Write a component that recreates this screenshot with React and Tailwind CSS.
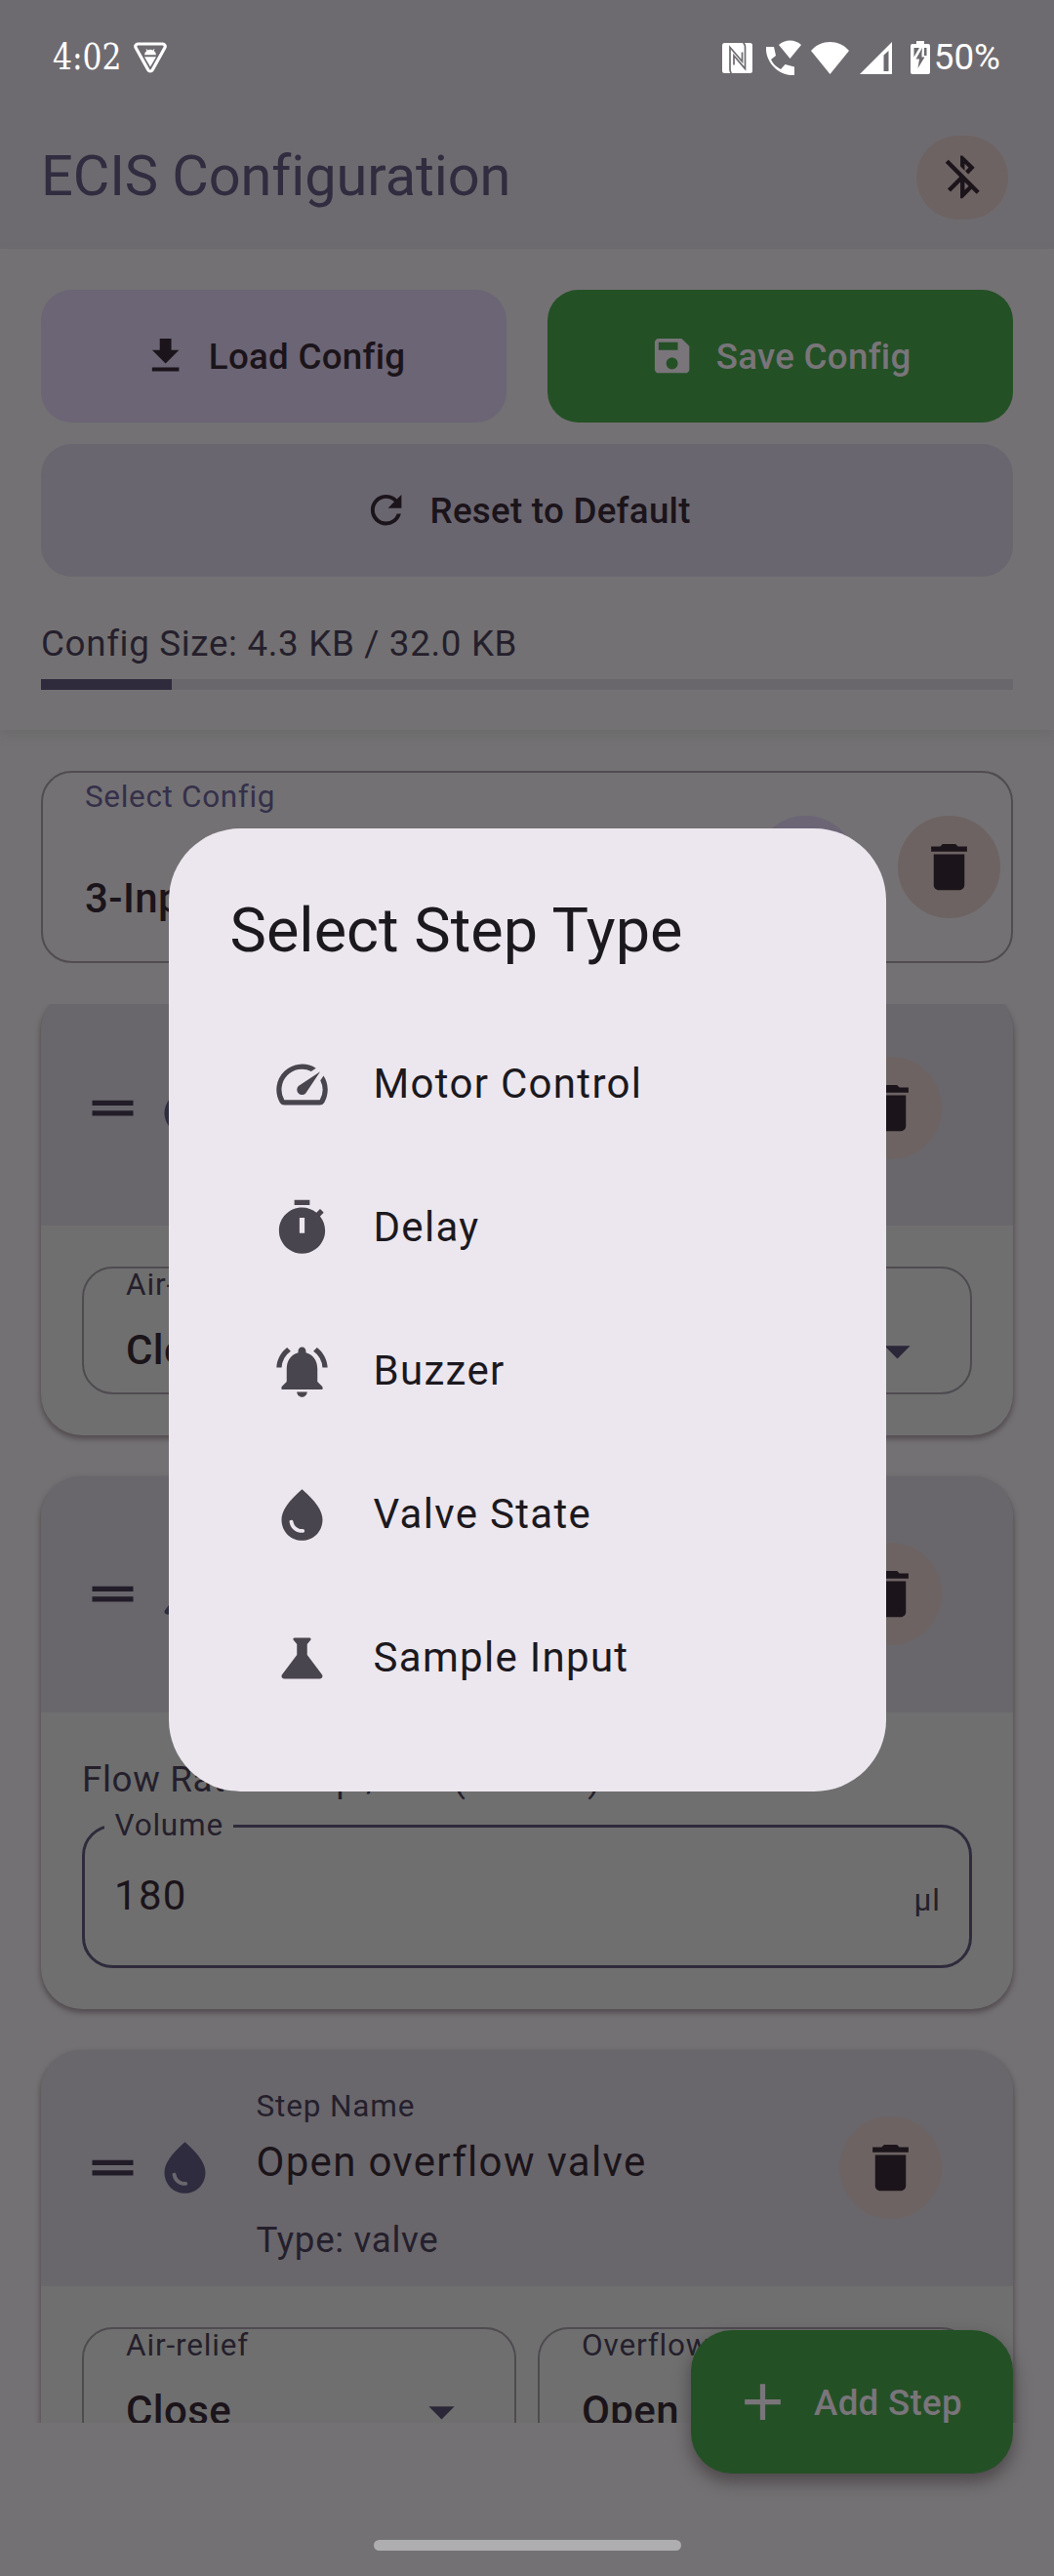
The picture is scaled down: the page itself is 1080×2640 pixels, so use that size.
const PATHS = {
  download: "M19 9h-4V3H9v6H5l7 7 7-7zM5 18v2h14v-2H5z",
  save: "M17 3H5c-1.11 0-2 .9-2 2v14c0 1.1.89 2 2 2h14c1.1 0 2-.9 2-2V7l-4-4zm-5 16c-1.66 0-3-1.34-3-3s1.34-3 3-3 3 1.34 3 3-1.34 3-3 3zm3-10H5V5h10v4z",
  refresh:
    "M17.65 6.35A7.958 7.958 0 0012 4c-4.42 0-7.99 3.58-7.99 8s3.57 8 7.99 8c3.73 0 6.84-2.55 7.73-6h-2.08A5.99 5.99 0 0112 18c-3.31 0-6-2.69-6-6s2.69-6 6-6c1.66 0 3.14.69 4.22 1.78L13 11h7V4l-2.35 2.35z",
  bluetoothOff:
    "M13 5.83l1.88 1.88-1.6 1.6 1.41 1.41 3.02-3.02L12 2h-1v5.03l2 2v-3.2zM5.41 4L4 5.41 10.59 12 5 17.59 6.41 19 11 14.41V22h1l4.29-4.29 2.3 2.29L20 18.59 5.41 4zM13 18.17v-3.76l1.88 1.88L13 18.17z",
  trash: "M6 19c0 1.1.9 2 2 2h8c1.1 0 2-.9 2-2V7H6v12zM19 4h-3.5l-1-1h-5l-1 1H5v2h14V4z",
  handle: "M20 9H4v2h16V9zM4 15h16v-2H4v2z",
  plus: "M19 13h-6v6h-2v-6H5v-2h6V5h2v6h6v2z",
  caret: "M7 10l5 5 5-5z",
  speed:
    "M20.38 8.57l-1.23 1.85a8 8 0 01-.22 7.58H5.07A8 8 0 0115.58 6.85l1.85-1.23A10 10 0 003.35 19a2 2 0 001.72 1h13.85a2 2 0 001.74-1 10 10 0 00-.27-10.44zm-9.79 6.84a2 2 0 002.83 0l5.66-8.49-8.49 5.66a2 2 0 000 2.83z",
  timer:
    "M15 1H9v2h6V1zm4.03 6.39l1.42-1.42c-.43-.51-.9-.99-1.41-1.41l-1.42 1.42C16.07 4.74 14.12 4 12 4c-4.97 0-9 4.03-9 9s4.02 9 9 9 9-4.03 9-9c0-2.12-.74-4.07-1.97-5.61zM13 14h-2V8h2v6z",
  bell: "M7.58 4.08L6.15 2.65C3.75 4.48 2.17 7.3 2.03 10.5h2a8.445 8.445 0 013.55-6.42zm12.39 6.42h2c-.15-3.2-1.73-6.02-4.12-7.85l-1.42 1.43a8.495 8.495 0 013.54 6.42zM18 11c0-3.07-1.64-5.64-4.5-6.32V4c0-.83-.67-1.5-1.5-1.5s-1.5.67-1.5 1.5v.68C7.63 5.36 6 7.92 6 11v5l-2 2v1h16v-1l-2-2v-5zm-6 11c.14 0 .27-.01.4-.04.65-.14 1.18-.58 1.44-1.18.1-.24.15-.5.15-.78h-4c.01 1.1.9 2 2.01 2z",
  drop: "M12 2c-5.33 4.55-8 8.48-8 11.8 0 4.98 3.8 8.2 8 8.2s8-3.22 8-8.2c0-3.32-2.67-7.25-8-11.8zM7.83 14c.37 0 .67.26.74.62.41 2.22 2.28 2.98 3.64 2.87.43-.02.79.32.79.75 0 .4-.32.73-.72.75-2.13.13-4.62-1.09-5.19-4.12A.75.75 0 017.83 14z",
  flask:
    "M19.8 18.4L14 10.67V6.5l1.35-1.69c.26-.33.03-.81-.39-.81H9.04c-.42 0-.65.48-.39.81L10 6.5v4.17L4.2 18.4c-.49.66-.02 1.6.8 1.6h14c.82 0 1.29-.94.8-1.6z",
};

function Icon({ name, className = "size-[63px]" }) {
  return (
    <svg viewBox="0 0 24 24" fill="currentColor" fillRule="evenodd" className={`shrink-0 ${className}`}>
      <path d={PATHS[name]} />
    </svg>
  );
}

function StatusBar() {
  return (
    <div className="flex h-[105px] items-center pt-[13px] pr-[55px] pl-[54px] text-white">
      <span className="w-[72px] origin-left scale-x-[0.85] font-['DejaVu_Serif',serif] text-[37px] leading-[44px] whitespace-nowrap">
        4:02
      </span>
      <svg viewBox="0 0 34 32" className="ml-[11px] h-8 w-[34px]">
        <path d="M4.5 2h25a2.6 2.6 0 0 1 2.3 4L19.3 28.6a2.6 2.6 0 0 1-4.6 0L2.2 6A2.6 2.6 0 0 1 4.5 2z" fill="none" stroke="#fff" strokeWidth="3.2" />
        <path d="M11 13.2a6 6 0 0 1 2.4-4.2l-.8-1.6.6-.4 1 1.5a6.4 6.4 0 0 1 5.6 0l1-1.5.6.4-.8 1.6a6 6 0 0 1 2.4 4.2zM11 15.2h12L17 25.5z" fill="#fff" />
      </svg>
      <div className="ml-auto flex items-center">
        <svg viewBox="0 0 31 31" className="size-[31px]">
          <rect width="31" height="31" rx="2.5" fill="#fff" />
          <path d="M9.500 31q-1.500-1-1.500-4V4.500L20.500 19V9.500M21.500 0q2 1 2 4v22.500L12 13v9.500" fill="none" stroke="#6e6b70" strokeWidth="1.700" />
        </svg>
        <svg viewBox="0 0 37 37" fill="#fff" className="ml-[13px] size-[37px]">
          <path d="M1 7h8l2 9-5 4c2.500 5 5.500 7.500 10 10l4.500-5 9.500 2.500V36C14 37 0 23 1 7z" />
          <path d="M14 5c6-6 17-6 23 0L25.500 19z" />
        </svg>
        <svg viewBox="0 0 39 33" fill="#fff" className="ml-[10px] h-[33px] w-[39px]">
          <path d="M0 9C10-3 29-3 39 9L19.500 33z" />
        </svg>
        <svg viewBox="0 0 33 33" className="ml-[11px] size-[33px]">
          <path d="M33 0v33H0z" fill="#fff" />
          <path d="M24.500 13.500L29.500 9v21h-5z" fill="#6e6b70" />
        </svg>
        <svg viewBox="0 0 20 34" className="ml-[19px] h-[34px] w-5">
          <path d="M6 0h8v3h4a2 2 0 0 1 2 2v27a2 2 0 0 1-2 2H2a2 2 0 0 1-2-2V5a2 2 0 0 1 2-2h4z" fill="#fff" />
          <path d="M3.500 7H9L3.500 16.500zM12 7L5.500 18.500H9l-1.500 9.500 7-11.500H11.500V13zM14 7h2.500v8H14z" fill="#6e6b70" />
        </svg>
        <span className="ml-[4px] text-[36.75px] leading-[44px]">50%</span>
      </div>
    </div>
  );
}

function Button({ icon, className, children }) {
  return (
    <div className={`flex h-[136px] items-center justify-center gap-[21px] rounded-[31.5px] text-[36.75px] font-medium tracking-[0.26px] ${className}`}>
      <Icon name={icon} className="size-[47.25px]" />
      <span className="pt-[2px]">{children}</span>
    </div>
  );
}

function TrashButton() {
  return (
    <div className="flex size-[105px] items-center justify-center rounded-full bg-[#6d6362] text-[#1b141a]">
      <Icon name="trash" />
    </div>
  );
}

function Select({ label, value }) {
  return (
    <div className="flex h-[131px] flex-1 items-start justify-between rounded-[31.5px] border-[2.6px] border-[#4f4b51] pr-[43px] pl-[43px]">
      <div>
        <div className="h-[38px] text-[31.5px] leading-[33px] tracking-[0.85px] text-[#251f2c]">{label}</div>
        <div className="mt-[14px] text-[42px] leading-[63px] font-medium tracking-[0.4px] text-[#1b141a]">{value}</div>
      </div>
      <Icon name="caret" className="mt-[53px] size-[63px] text-[#2b2738]" />
    </div>
  );
}

function StepCard({ icon, name, type, children }) {
  return (
    <div className="mb-[42px] overflow-hidden rounded-[42px] bg-[#6f6f6f] shadow-[0_3px_5px_1px_rgba(60,50,55,0.55)]">
      <div className="flex h-[241.5px] items-center bg-[#69676c] pr-[73px] pl-[42px]">
        <Icon name="handle" className="size-[63px] text-[#221c28]" />
        <Icon name={icon} className="ml-[10.5px] size-[63px] text-[#302c3f]" />
        <div className="mt-[16.5px] ml-[42px] flex-1">
          <div className="text-[31.5px] leading-[42px] tracking-[0.85px] text-[#251f2c]">Step Name</div>
          <div className="mt-[4px] text-[42px] leading-[63px] tracking-[1.31px] text-[#1b141a]">{name}</div>
          <div className="mt-[23.5px] text-[36.75px] leading-[52.5px] tracking-[0.66px] text-[#251f2c]">{type}</div>
        </div>
        <TrashButton />
      </div>
      <div className="px-[42px] pb-[42px]">{children}</div>
    </div>
  );
}

const STEP_TYPES = [
  ["speed", "Motor Control"],
  ["timer", "Delay"],
  ["bell", "Buzzer"],
  ["drop", "Valve State"],
  ["flask", "Sample Input"],
];

function StepTypeDialog() {
  return (
    <div className="absolute inset-x-0 top-[849px] flex justify-center">
      <div className="h-[987px] w-[735px] rounded-[73.5px] bg-[#ece7ee] px-[63px] pt-[63px]">
        <h2 className="text-[63px] leading-[84px] text-[#1c191e]">Select Step Type</h2>
        <ul className="mt-[42px]">
          {STEP_TYPES.map(([icon, label]) => (
            <li key={label} className="flex h-[147px] items-center pl-[42px]">
              <Icon name={icon} className="size-[63px] text-[#49454e]" />
              <span className="ml-[42px] pb-[2px] text-[42px] tracking-[1.31px] text-[#1c191e]">{label}</span>
            </li>
          ))}
        </ul>
      </div>
    </div>
  );
}

export default function App() {
  return (
    <div className="relative h-[2640px] w-[1080px] overflow-hidden bg-[#737173] font-['Roboto',sans-serif]">
      <header className="h-[255px] bg-[#6e6b70]">
        <StatusBar />
        <div className="flex h-[150px] items-center justify-between pr-[47px] pl-[42px]">
          <h1 className="text-[57.75px] leading-[73px] tracking-[-0.1px] text-[#312c3f]">ECIS Configuration</h1>
          <div className="mt-[3px] flex h-[86px] w-[94.5px] items-center justify-center rounded-[43px] bg-[#6d6362] text-[#1b141a]">
            <Icon name="bluetoothOff" className="size-[52.5px]" />
          </div>
        </div>
      </header>

      <section className="h-[493px] px-[42px] pt-[42px] shadow-[0_5px_8px_0_rgba(104,104,104,0.5)]">
        <div className="grid grid-cols-2 gap-x-[42px] gap-y-[22px]">
          <Button icon="download" className="bg-[#6b6575] text-[#1b141a]">Load Config</Button>
          <Button icon="save" className="bg-[#245026] text-[#79757a]">Save Config</Button>
          <Button icon="refresh" className="col-span-2 bg-[#6a6670] text-[#1b141a]">Reset to Default</Button>
        </div>
        <div className="mt-[43px] text-[36.75px] leading-[52.5px] tracking-[0.66px] text-[#251f2c]">Config Size: 4.3 KB / 32.0 KB</div>
        <div className="mt-[9.5px] h-[10.5px] bg-[#69676c]">
          <div className="h-full w-[134px] bg-[#2f2b3c]" />
        </div>
      </section>

      <div className="mx-[42px] mt-[42px] flex h-[197px] items-center rounded-[31.5px] border-[2.6px] border-[#504c50] pr-[11px] pl-[43px]">
        <div className="flex-1 self-start">
          <div className="mt-[4px] text-[31.5px] leading-[42px] tracking-[0.66px] text-[#35304a]">Select Config</div>
          <div className="mt-[51px] text-[42px] leading-[63px] font-medium tracking-[0.4px] text-[#1b141a]">3-Input Config</div>
        </div>
        <div className="mr-[42px] size-[105px] rounded-full bg-[#6b6575]" />
        <TrashButton />
      </div>

      <main className="mt-[42px] h-[1454px] overflow-hidden px-[42px]">
        <div className="mt-[-14.5px]">
          <StepCard icon="drop" name="Close valve" type="Type: valve">
            <div className="flex pt-[42px]">
              <Select label="Air-relief" value="Close" />
            </div>
          </StepCard>
          <StepCard icon="flask" name="Sample" type="Type: sample">
            <div className="pt-[43px] text-[36.75px] leading-[52.5px] tracking-[0.66px] text-[#251f2c]">Flow Rate: 100 µl/min (Normal)</div>
            <fieldset className="flex h-[167px] items-center justify-between rounded-[31.5px] border-[3px] border-[#2f2b3c] pr-[29px] pl-[20px]">
              <legend className="px-[10.5px] text-[31.5px] leading-[42px] tracking-[0.8px] text-[#251f2c]">Volume</legend>
              <span className="mt-[-21px] pl-[10px] text-[42px] leading-[63px] tracking-[1.31px] text-[#1b141a]">180</span>
              <span className="mt-[-10px] text-[31.5px] tracking-[1.05px] text-[#251f2c]">µl</span>
            </fieldset>
          </StepCard>
          <StepCard icon="drop" name="Open overflow valve" type="Type: valve">
            <div className="flex gap-[22px] pt-[42px]">
              <Select label="Air-relief" value="Close" />
              <Select label="Overflow" value="Open" />
            </div>
          </StepCard>
        </div>
      </main>

      <div className="absolute top-[2388px] right-[42px] flex h-[147px] w-[330px] items-center gap-[21px] rounded-[42px] bg-[#245026] pl-[42px] text-[#79757a] shadow-[0_8px_16px_1px_rgba(50,42,46,0.55)]">
        <Icon name="plus" className="size-[63px]" />
        <span className="pt-[2px] text-[36.75px] font-medium tracking-[0.26px]">Add Step</span>
      </div>

      <div className="mx-auto mt-[120px] h-[11px] w-[315px] rounded-full bg-[#aeadb0]" />

      <StepTypeDialog />
    </div>
  );
}
